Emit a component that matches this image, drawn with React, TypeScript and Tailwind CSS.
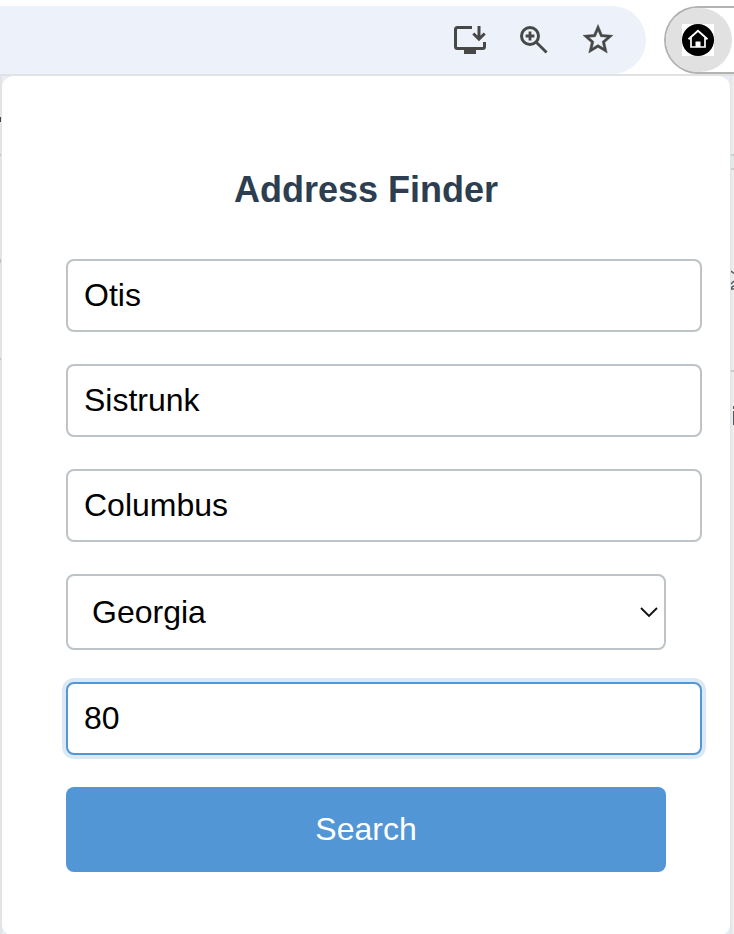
import React from "react";

function InstallIcon() {
  return (
    <svg className="h-10 w-10" viewBox="0 0 40 40" fill="none" stroke="#474747" strokeWidth="3">
      <path d="M22 7.5H7.5Q5.500 7.500 5.500 9.500V26.500Q5.500 28.500 7.500 28.500H32.500Q34.500 28.500 34.500 26.500V22" />
      <path d="M14 29h12v5H14z" fill="#474747" stroke="none" />
      <path d="M29 6v13M23.300 13.500L29 19.200L34.700 13.500" strokeWidth="3" />
    </svg>
  );
}

function ZoomIcon() {
  return (
    <svg className="h-10 w-10" viewBox="0 0 40 40" fill="none" stroke="#474747" strokeWidth="3">
      <circle cx="16" cy="16" r="8.500" />
      <path d="M22 22L32.600 32.600" strokeWidth="2.800" />
      <path d="M16 11.600v8.800M11.600 16h8.800" strokeWidth="2.800" />
    </svg>
  );
}

function StarIcon() {
  return (
    <svg className="h-10 w-10" viewBox="0 0 40 40" fill="#474747" stroke="#474747" strokeWidth="0.300">
      <path
        transform="translate(2 1.500) scale(1.500)"
        d="M22 9.240l-7.190-.620L12 2 9.190 8.630 2 9.240l5.460 4.730L5.820 21 12 17.270 18.180 21l-1.630-7.030L22 9.240zM12 15.400l-3.760 2.270 1-4.280-3.320-2.880 4.380-.380L12 6.100l1.710 4.040 4.380.380-3.320 2.880 1 4.280L12 15.400z"
      />
    </svg>
  );
}

function HomeIcon() {
  return (
    <svg className="h-8 w-8 bg-white" viewBox="0 0 32 32" fill="none">
      <circle cx="16" cy="16" r="16" fill="#000" />
      <path d="M6.500 15.200L16 6.800L25.500 15.200" stroke="#fff" strokeWidth="1.900" />
      <path d="M9 13.500V23H23V13.500" stroke="#fff" strokeWidth="1.700" />
      <path d="M13.500 17.500h5V23h-5z" fill="#fff" />
    </svg>
  );
}

function Toolbar() {
  return (
    <header className="flex h-[74px] justify-between bg-white pt-1.5">
      <div className="flex h-[68px] w-[646px] items-center justify-end gap-6 rounded-r-full bg-[#edf2fa] pr-7">
        <InstallIcon />
        <ZoomIcon />
        <StarIcon />
      </div>
      <div className="flex h-[68px] w-[70px] rounded-l-full border-y-2 border-l-2 border-[#b3b3b3]">
        <div className="flex h-16 w-[66px] shrink-0 items-center justify-center rounded-full bg-[#e1e1e1] pr-0.5">
          <HomeIcon />
        </div>
      </div>
    </header>
  );
}

const field =
  "block h-[73px] w-[636px] shrink-0 rounded-lg border-2 border-[#bdc3c7] bg-white px-4 text-[32px] text-black outline-none";

export default function App() {
  return (
    <div className="relative flex h-[934px] w-[734px] flex-col overflow-hidden bg-white font-['Liberation_Sans',Arial,sans-serif]">
      <Toolbar />
      <div className="flex flex-1 bg-[linear-gradient(90deg,#e4e4e4_0px,#e4e4e4_365px,#e2e3e3_730px,#f0f0f0_734px)] pt-0.5 pl-0.5 shadow-[inset_0_2px_0_#e1e2e3]">
        <main className="z-10 h-[860px] w-[728px] shrink-0 bg-[#e8edf5]">
          <form
            className="flex h-[860px] flex-col items-start gap-8 rounded-xl bg-white pl-16"
            onSubmit={(event) => event.preventDefault()}
          >
            <h1 className="mt-[93px] mb-[16px] h-[42px] w-[600px] text-center text-4xl leading-[42px] font-bold text-[#2c3e50]">
              Address Finder
            </h1>
            <input className={field} defaultValue="Otis" aria-label="First name" />
            <input className={field} defaultValue="Sistrunk" aria-label="Last name" />
            <input className={field} defaultValue="Columbus" aria-label="City" />
            <button
              type="button"
              className="flex h-[76px] w-[600px] shrink-0 items-center justify-between rounded-lg border-2 border-[#bdc3c7] bg-white pr-1.5 pl-6 text-[32px] text-black"
            >
              <span>Georgia</span>
              <svg className="h-3 w-[18px]" viewBox="0 0 18 12" fill="none">
                <path d="M1 2L9 10L17 2" stroke="#111" strokeWidth="1.900" />
              </svg>
            </button>
            <input
              className="block h-[73px] w-[636px] shrink-0 rounded-lg border-2 border-[#5296d5] bg-white px-4 text-[32px] text-black shadow-[0_0_0_4px_#dbe9f7] outline-none"
              defaultValue="80"
              aria-label="Age"
            />
            <button className="h-[85px] w-[600px] shrink-0 rounded-lg bg-[#5296d5] pb-0.5 text-[32px] text-white">
              Search
            </button>
          </form>
        </main>
      </div>
      <div className="absolute top-[117px] left-0 h-[5px] w-px bg-[#444]" />
      <div className="absolute top-[154px] left-0 h-0.5 w-px bg-[#c8c8c8]" />
      <div className="absolute top-[259px] left-0 h-1 w-px bg-[#c0c0c0]" />
      <div className="absolute top-[358px] left-0 h-0.5 w-px bg-[#c4c4c4]" />
      <div className="absolute top-[154px] left-[731px] h-4 w-[3px] border-y-2 border-[#cbd0d0] bg-[#e5e8e8]" />
      <div className="absolute top-[370px] left-[731px] h-0.5 w-[3px] bg-[#c6cbcc]" />
      <svg className="absolute top-[268px] left-[731px] h-6 w-[3px]" viewBox="0 0 3 24" fill="none" stroke="#53565e" strokeWidth="1.500">
        <path d="M0 3L3 5.500M3 13L0 16M0 21Q1 18 3 18M0 21H3" />
      </svg>
      <div className="absolute top-[406px] left-[733px] h-[3px] w-px bg-[#555860]" />
      <div className="absolute top-[411px] left-[733px] h-[14px] w-px bg-[#555860]" />
    </div>
  );
}
